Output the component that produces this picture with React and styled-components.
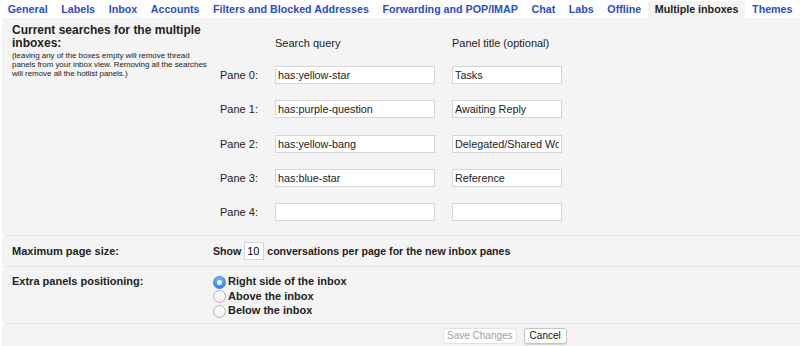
import React from "react";
import styled, { createGlobalStyle } from "styled-components";

const Global = createGlobalStyle`
  html, body { margin: 0; padding: 0; background: #fff; }
  body { font-family: "Liberation Sans", Arial, sans-serif; color: #222; }
  * { box-sizing: border-box; }
`;

const Page = styled.div`
  width: 800px;
  height: 346px;
  overflow: hidden;
  background: #fff;
`;

const Tabs = styled.nav`
  display: flex;
  height: 18px;
  padding-left: 1px;
  padding-top: 1px;
`;

const Tab = styled.div`
  padding: 0 6.8px;
  font-size: 10.7px;
  font-weight: bold;
  line-height: 17px;
  white-space: nowrap;
  color: ${(p) => (p.$active ? "#222" : "#2a4bd2")};
  background: ${(p) => (p.$active ? "#f4f4f4" : "transparent")};
`;

const Content = styled.div`
  background: #f4f4f4;
  margin-left: 2px;
  height: 328px;
`;

const Section = styled.div`
  display: flex;
  padding: ${(p) => p.$pad || "0"};
  border-bottom: ${(p) => (p.$line ? "1px solid #e3e3e3" : "none")};
  margin-left: 3px;
`;

const LeftCell = styled.div`
  width: 208px;
  padding-left: 7px;
  flex-shrink: 0;
`;

const Heading = styled.div`
  font-size: ${(p) => p.$size || "12px"};
  font-weight: bold;
  line-height: ${(p) => p.$lh || "13px"};
  width: 200px;
  padding-top: ${(p) => p.$top || "0"};
`;

const Note = styled.div`
  font-size: 8px;
  line-height: 9px;
  color: #222;
  width: 201px;
  letter-spacing: -0.05px;
  margin-top: 1px;
`;

const Right = styled.div`
  padding-top: ${(p) => p.$top || "0"};
`;

const PaneGrid = styled.div`
  display: grid;
  grid-template-columns: 55px 160px 17px 110px;
  grid-template-rows: 14px;
  grid-auto-rows: 18px;
  row-gap: 16.2px;
  padding-left: 7px;
  align-items: center;
`;

const ColHead = styled.div`
  font-size: 11px;
  line-height: 14px;
  grid-column: ${(p) => p.$col};
`;

const PaneLabel = styled.div`
  font-size: 11px;
  grid-column: 1;
`;

const TextBox = styled.input`
  grid-column: ${(p) => p.$col};
  width: 100%;
  height: 18px;
  border: 1px solid #d6d6d6;
  background: #fff;
  font-family: "Liberation Sans", Arial, sans-serif;
  font-size: 10.8px;
  color: #222;
  padding: 0 2px;
  margin: 0;
  outline: none;
`;

const Line = styled.div`
  display: flex;
  align-items: center;
  font-size: 10.6px;
  font-weight: bold;
  gap: 3px;
`;

const SmallBox = styled.input`
  width: 20px;
  height: 18px;
  border: 1px solid #d6d6d6;
  background: #fff;
  font-family: "Liberation Sans", Arial, sans-serif;
  font-size: 11px;
  padding: 0 2px;
  margin: 0;
  outline: none;
`;

const RadioList = styled.div`
  display: flex;
  flex-direction: column;
`;

const RadioRow = styled.label`
  display: flex;
  align-items: center;
  height: 14.5px;
  font-size: 11px;
  font-weight: bold;
  gap: 2px;
`;

const Radio = styled.span`
  width: 13px;
  height: 13px;
  border-radius: 50%;
  flex-shrink: 0;
  position: relative;
  top: 1px;
  border: 1px solid ${(p) => (p.$checked ? "#3a7fe0" : "#b4b4b4")};
  background: ${(p) =>
    p.$checked ? "linear-gradient(#6cb3fa, #2f86ee)" : "linear-gradient(#fff, #f0f0f0)"};
  display: flex;
  align-items: center;
  justify-content: center;
  &::after {
    content: "";
    display: ${(p) => (p.$checked ? "block" : "none")};
    width: 5px;
    height: 5px;
    border-radius: 50%;
    background: #fff;
  }
`;

const Buttons = styled.div`
  display: flex;
  gap: 7px;
  padding: 4px 0 0 441px;
`;

const Button = styled.button`
  height: 16px;
  padding: ${(p) => (p.$disabled ? "0 3px" : "0 5px")};
  font-family: "Liberation Sans", Arial, sans-serif;
  font-size: 10px;
  line-height: 14px;
  border-radius: 3px;
  background: #fff;
  color: ${(p) => (p.$disabled ? "#a0a0a0" : "#111")};
  border: 1px solid ${(p) => (p.$disabled ? "#e2e2e2" : "#c4c4c4")};
  box-shadow: ${(p) => (p.$disabled ? "none" : "0 1px 1px rgba(0,0,0,0.12)")};
`;

const tabs = [
  "General",
  "Labels",
  "Inbox",
  "Accounts",
  "Filters and Blocked Addresses",
  "Forwarding and POP/IMAP",
  "Chat",
  "Labs",
  "Offline",
  "Multiple inboxes",
  "Themes",
];

const panes = [
  ["has:yellow-star", "Tasks"],
  ["has:purple-question", "Awaiting Reply"],
  ["has:yellow-bang", "Delegated/Shared Wo"],
  ["has:blue-star", "Reference"],
  ["", ""],
];

export default function App() {
  return (
    <Page>
      <Global />
      <Tabs>
        {tabs.map((t) => (
          <Tab key={t} $active={t === "Multiple inboxes"}>
            {t}
          </Tab>
        ))}
      </Tabs>
      <Content>
        <Section $line $pad="0 0 14px 0">
          <LeftCell>
            <Heading $top="6px">Current searches for the multiple inboxes:</Heading>
            <Note>
              (leaving any of the boxes empty will remove thread panels from your inbox view.
              Removing all the searches will remove all the hotlist panels.)
            </Note>
          </LeftCell>
          <Right $top="18px">
            <PaneGrid>
              <ColHead $col="2">Search query</ColHead>
              <ColHead $col="4">Panel title (optional)</ColHead>
              {panes.map(([q, t], i) => (
                <React.Fragment key={i}>
                  <PaneLabel>Pane {i}:</PaneLabel>
                  <TextBox $col="2" defaultValue={q} readOnly />
                  <TextBox $col="4" defaultValue={t} readOnly />
                </React.Fragment>
              ))}
            </PaneGrid>
          </Right>
        </Section>
        <Section $line $pad="6px 0 6px 0">
          <LeftCell>
            <Heading $size="11px" $lh="18px">Maximum page size:</Heading>
          </LeftCell>
          <Line>
            Show <SmallBox defaultValue="10" readOnly /> conversations per page for the new inbox panes
          </Line>
        </Section>
        <Section $line $pad="7px 0 6px 0">
          <LeftCell>
            <Heading $size="11px" $lh="14px">Extra panels positioning:</Heading>
          </LeftCell>
          <RadioList>
            <RadioRow>
              <Radio $checked />
              Right side of the inbox
            </RadioRow>
            <RadioRow>
              <Radio />
              Above the inbox
            </RadioRow>
            <RadioRow>
              <Radio />
              Below the inbox
            </RadioRow>
          </RadioList>
        </Section>
        <Buttons>
          <Button $disabled>Save Changes</Button>
          <Button>Cancel</Button>
        </Buttons>
      </Content>
    </Page>
  );
}
